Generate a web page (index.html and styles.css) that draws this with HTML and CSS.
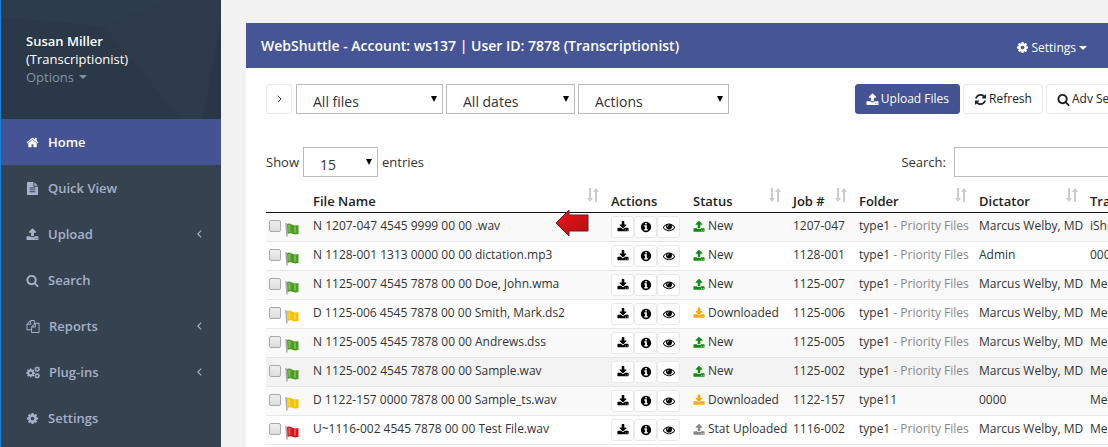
FILE: index.html
```html
<!DOCTYPE html>
<html lang="en">

<head>
    <meta charset="UTF-8">
    <meta name="viewport" content="width=device-width, initial-scale=1.0">
    <title>WebShuttle</title>
    <link rel="stylesheet" href="styles.css">
</head>

<body>
    <!-- Icon sprite -->
    <svg class="sprite" aria-hidden="true">
        <symbol id="i-home" viewBox="0 0 1792 1792"><path d="M1472 992v480q0 26-19 45t-45 19h-384v-384h-256v384h-384q-26 0-45-19t-19-45v-480q0-1 .5-3t.5-3l575-474 575 474q1 2 1 6zm223-69l-62 74q-8 9-21 11h-3q-13 0-21-7l-692-577-692 577q-12 8-24 7-13-2-21-11l-62-74q-8-10-7-23.5t11-21.5l719-599q32-26 76-26t76 26l244 204v-195q0-14 9-23t23-9h192q14 0 23 9t9 23v408l219 182q10 8 11 21.5t-7 23.5z"/></symbol>
        <symbol id="i-file" viewBox="0 0 1792 1792"><path d="M1596 476q14 14 28 36h-472v-472q22 14 36 28zm-476 164h544v1056q0 40-28 68t-68 28h-1344q-40 0-68-28t-28-68v-1600q0-40 28-68t68-28h800v544q0 40 28 68t68 28zm160 736v-64q0-14-9-23t-23-9h-704q-14 0-23 9t-9 23v64q0 14 9 23t23 9h704q14 0 23-9t9-23zm0-256v-64q0-14-9-23t-23-9h-704q-14 0-23 9t-9 23v64q0 14 9 23t23 9h704q14 0 23-9t9-23zm0-256v-64q0-14-9-23t-23-9h-704q-14 0-23 9t-9 23v64q0 14 9 23t23 9h704q14 0 23-9t9-23z"/></symbol>
        <symbol id="i-upload" viewBox="0 0 1792 1792"><path d="M1344 1472q0-26-19-45t-45-19-45 19-19 45 19 45 45 19 45-19 19-45zm256 0q0-26-19-45t-45-19-45 19-19 45 19 45 45 19 45-19 19-45zm128-224v320q0 40-28 68t-68 28h-1472q-40 0-68-28t-28-68v-320q0-40 28-68t68-28h427q21 56 70.5 92t110.5 36h256q61 0 110.5-36t70.5-92h427q40 0 68 28t28 68zm-325-648q-17 40-59 40h-256v448q0 26-19 45t-45 19h-256q-26 0-45-19t-19-45v-448h-256q-42 0-59-40-17-39 14-69l448-448q18-19 45-19t45 19l448 448q31 30 14 69z"/></symbol>
        <symbol id="i-download" viewBox="0 0 1792 1792"><path d="M1344 1344q0-26-19-45t-45-19-45 19-19 45 19 45 45 19 45-19 19-45zm256 0q0-26-19-45t-45-19-45 19-19 45 19 45 45 19 45-19 19-45zm128-224v320q0 40-28 68t-68 28h-1472q-40 0-68-28t-28-68v-320q0-40 28-68t68-28h465l135 136q58 56 136 56t136-56l136-136h464q40 0 68 28t28 68zm-325-569q17 41-14 70l-448 448q-18 19-45 19t-45-19l-448-448q-31-29-14-70 17-39 59-39h256v-448q0-26 19-45t45-19h256q26 0 45 19t19 45v448h256q42 0 59 39z"/></symbol>
        <symbol id="i-search" viewBox="0 0 1792 1792"><path d="M1216 832q0-185-131.5-316.5t-316.5-131.5-316.5 131.5-131.5 316.5 131.5 316.5 316.5 131.5 316.5-131.5 131.5-316.5zm512 832q0 52-38 90t-90 38q-54 0-90-38l-343-342q-179 124-399 124-143 0-273.5-55.5t-225-150-150-225-55.5-273.5 55.5-273.5 150-225 225-150 273.5-55.5 273.5 55.5 225 150 150 225 55.5 273.5q0 220-124 399l343 343q37 37 37 90z"/></symbol>
        <symbol id="i-copy" viewBox="0 0 1792 1792"><path d="M1696 384q40 0 68 28t28 68v1216q0 40-28 68t-68 28h-960q-40 0-68-28t-28-68v-288h-544q-40 0-68-28t-28-68v-672q0-40 20-88t48-76l408-408q28-28 76-48t88-20h416q40 0 68 28t28 68v328q68-40 128-40h416zm-544 213l-299 299h299v-299zm-640-384l-299 299h299v-299zm196 647l316-316v-416h-384v416q0 40-28 68t-68 28h-416v640h512v-256q0-40 20-88t48-76zm956 804v-1152h-384v416q0 40-28 68t-68 28h-416v640h896z"/></symbol>
        <symbol id="i-cog" viewBox="0 0 1792 1792"><path d="M1152 896q0-106-75-181t-181-75-181 75-75 181 75 181 181 75 181-75 75-181zm512-109v222q0 12-8 23t-20 13l-185 28q-19 54-39 91 35 50 107 138 10 12 10 25t-9 23q-27 37-99 108t-94 71q-12 0-26-9l-138-108q-44 23-91 38-16 136-29 186-7 28-36 28h-222q-14 0-24.5-8.5t-11.5-21.5l-28-184q-49-16-90-37l-141 107q-10 9-25 9-14 0-25-11-126-114-165-168-7-10-7-23 0-12 8-23 15-21 51-66.5t54-70.5q-27-50-41-99l-183-27q-13-2-21-12.5t-8-23.5v-222q0-12 8-23t19-13l186-28q14-46 39-92-40-57-107-138-10-12-10-24 0-10 9-23 26-36 98.5-107.5t94.5-71.5q13 0 26 10l138 107q44-23 91-38 16-136 29-186 7-28 36-28h222q14 0 24.5 8.5t11.5 21.5l28 184q49 16 90 37l142-107q9-9 24-9 13 0 25 10 129 119 165 170 7 8 7 22 0 12-8 23-15 21-51 66.5t-54 70.5q26 50 41 98l183 28q13 2 21 12.5t8 23.5z"/></symbol>
        <symbol id="i-cogs" viewBox="0 0 14 14">
            <use href="#i-cog" x="-1" y="2" width="11" height="11"/>
            <use href="#i-cog" x="8" y="0" width="7" height="7"/>
            <use href="#i-cog" x="8" y="7" width="7" height="7"/>
        </symbol>
        <symbol id="i-refresh" viewBox="0 0 1792 1792"><path d="M1639 1056q0 5-1 7-64 268-268 434.5t-478 166.5q-146 0-282.5-55t-243.5-157l-129 129q-19 19-45 19t-45-19-19-45v-448q0-26 19-45t45-19h448q26 0 45 19t19 45-19 45l-137 137q71 66 161 102t187 36q134 0 250-65t186-179q11-17 53-117 8-23 30-23h192q13 0 22.5 9.5t9.5 22.5zm25-800v448q0 26-19 45t-45 19h-448q-26 0-45-19t-19-45 19-45l138-138q-148-137-349-137-134 0-250 65t-186 179q-11 17-53 117-8 23-30 23h-199q-13 0-22.5-9.5t-9.5-22.5v-7q65-268 270-434.5t480-166.5q146 0 284 55.5t245 156.5l130-129q19-19 45-19t45 19 19 45z"/></symbol>
        <symbol id="i-info" viewBox="0 0 1792 1792"><path d="M1152 1376v-160q0-14-9-23t-23-9h-96v-512q0-14-9-23t-23-9h-320q-14 0-23 9t-9 23v160q0 14 9 23t23 9h96v320h-96q-14 0-23 9t-9 23v160q0 14 9 23t23 9h448q14 0 23-9t9-23zm-128-896v-160q0-14-9-23t-23-9h-192q-14 0-23 9t-9 23v160q0 14 9 23t23 9h192q14 0 23-9t9-23zm640 416q0 209-103 385.5t-279.5 279.5-385.5 103-385.5-103-279.5-279.5-103-385.5 103-385.5 279.5-279.5 385.5-103 385.5 103 279.5 279.5 103 385.5z"/></symbol>
        <symbol id="i-eye" viewBox="0 0 1792 1792"><path d="M1664 960q-152-236-381-353 61 104 61 225 0 185-131.5 316.5t-316.5 131.5-316.5-131.5-131.5-316.5q0-121 61-225-229 117-381 353 133 205 333.5 326.5t434.5 121.5 434.5-121.5 333.5-326.5zm-720-384q0-20-14-34t-34-14q-125 0-214.5 89.5t-89.5 214.5q0 20 14 34t34 14 34-14 14-34q0-86 61-147t147-61q20 0 34-14t14-34zm848 384q0 34-20 69-140 230-376.5 368.5t-499.5 138.5-499.5-139-376.5-368q-20-35-20-69t20-69q140-229 376.5-368t499.5-139 499.5 139 376.5 368q20 35 20 69z"/></symbol>
        <symbol id="i-left" viewBox="0 0 6 10"><path d="M5 1L1 5l4 4" fill="none" stroke="currentColor" stroke-width="1.4"/></symbol>
        <symbol id="i-right" viewBox="0 0 6 10"><path d="M1 1l4 4-4 4" fill="none" stroke="currentColor" stroke-width="1.2"/></symbol>
        <symbol id="i-caret" viewBox="0 0 8 4"><path d="M0 0h8L4 4z"/></symbol>
        <symbol id="i-sort" viewBox="0 0 12 14"><path d="M2 0h2v10h2l-3 4-3-4h2zM8 14h2V4h2L9 0 6 4h2z"/></symbol>
        <symbol id="i-flag" viewBox="0 0 14 15">
            <path d="M1 1l1 13.500" fill="none" stroke="#a9a9a9" stroke-width="1.5"/>
            <path d="M2 2q2.500-1 5 .5t6.500.5v9q-3.500 1-6-.2t-5 .2z"/>
            <path d="M3 3q1.500-.6 2.500-.2v7.500q-1-.4-2 0zM9 4.500h2v6H9z" fill="#fff" opacity=".25"/>
        </symbol>
    </svg>

    <div class="layout">
        <aside class="sidebar">
            <div class="profile">
                <svg class="facets" viewBox="0 0 220 119" preserveAspectRatio="none" aria-hidden="true">
                    <path d="M0 0h170l-68 26L0 17z" fill="#2d3c4b"/>
                    <path d="M102 26L170 0h50v20l-18 99h-22z" fill="#2d3a49"/>
                    <path d="M220 20v99h-18z" fill="#2a3746"/>
                </svg>
                <strong>Susan Miller</strong>
                <span>(Transcriptionist)</span>
                <a href="#" class="options">Options <svg class="caret"><use href="#i-caret"/></svg></a>
            </div>
            <nav>
                <a href="#" class="active"><svg class="icon"><use href="#i-home"/></svg>Home</a>
                <a href="#"><svg class="icon"><use href="#i-file"/></svg>Quick View</a>
                <a href="#"><svg class="icon"><use href="#i-upload"/></svg>Upload<svg class="chevron"><use href="#i-left"/></svg></a>
                <a href="#"><svg class="icon"><use href="#i-search"/></svg>Search</a>
                <a href="#"><svg class="icon wide"><use href="#i-copy"/></svg>Reports<svg class="chevron"><use href="#i-left"/></svg></a>
                <a href="#"><svg class="icon wide"><use href="#i-cogs"/></svg>Plug-ins<svg class="chevron"><use href="#i-left"/></svg></a>
                <a href="#"><svg class="icon"><use href="#i-cog"/></svg>Settings</a>
            </nav>
        </aside>

        <main>
            <section class="panel">
                <header class="panel-header">
                    <h1>WebShuttle - Account: ws137 | User ID: 7878 (Transcriptionist)</h1>
                    <button class="settings"><svg class="icon"><use href="#i-cog"/></svg>Settings<svg class="caret"><use href="#i-caret"/></svg></button>
                </header>

                <div class="panel-body">
                    <div class="toolbar">
                        <div class="filters">
                            <button class="btn btn-expand" aria-label="Expand"><svg class="chevron"><use href="#i-right"/></svg></button>
                            <span class="select files"><select aria-label="Files"><option>All files</option></select></span>
                            <span class="select dates"><select aria-label="Dates"><option>All dates</option></select></span>
                            <span class="select actions"><select aria-label="Actions"><option>Actions</option></select></span>
                        </div>
                        <div class="buttons">
                            <button class="btn btn-primary"><svg class="icon"><use href="#i-upload"/></svg>Upload Files</button>
                            <button class="btn"><svg class="icon"><use href="#i-refresh"/></svg>Refresh</button>
                            <button class="btn"><svg class="icon"><use href="#i-search"/></svg>Adv Search</button>
                        </div>
                    </div>

                    <div class="table-controls">
                        <label>Show <span class="select length"><select><option>15</option></select></span> entries</label>
                        <label>Search: <input type="search" class="search-box"></label>
                    </div>

                    <table>
                        <thead>
                            <tr>
                                <th class="col-check"></th>
                                <th class="col-name"><div>File Name<svg class="sort"><use href="#i-sort"/></svg></div></th>
                                <th class="col-actions"><div>Actions</div></th>
                                <th class="col-status"><div>Status<svg class="sort"><use href="#i-sort"/></svg></div></th>
                                <th class="col-job"><div>Job #<svg class="sort"><use href="#i-sort"/></svg></div></th>
                                <th class="col-folder"><div>Folder<svg class="sort"><use href="#i-sort"/></svg></div></th>
                                <th class="col-dictator"><div>Dictator<svg class="sort"><use href="#i-sort"/></svg></div></th>
                                <th><div>Transcriber</div></th>
                            </tr>
                        </thead>
                        <tbody id="jobs"></tbody>
                    </table>
                </div>
            </section>
        </main>
    </div>

    <script>
        // flag, file name, status, job, folder, dictator, transcriber
        const jobs = [
            ['green', 'N 1207-047 4545 9999 00 00 .wav', 'New', '1207-047', 'type1', 'Marcus Welby, MD', 'iShuttle'],
            ['green', 'N 1128-001 1313 0000 00 00 dictation.mp3', 'New', '1128-001', 'type1', 'Admin', '0000'],
            ['green', 'N 1125-007 4545 7878 00 00 Doe, John.wma', 'New', '1125-007', 'type1', 'Marcus Welby, MD', 'Medical'],
            ['yellow', 'D 1125-006 4545 7878 00 00 Smith, Mark.ds2', 'Downloaded', '1125-006', 'type1', 'Marcus Welby, MD', 'Medical'],
            ['green', 'N 1125-005 4545 7878 00 00 Andrews.dss', 'New', '1125-005', 'type1', 'Marcus Welby, MD', 'Medical'],
            ['green', 'N 1125-002 4545 7878 00 00 Sample.wav', 'New', '1125-002', 'type1', 'Marcus Welby, MD', 'Medical'],
            ['yellow', 'D 1122-157 0000 7878 00 00 Sample_ts.wav', 'Downloaded', '1122-157', 'type11', '0000', 'Medical'],
            ['red', 'U~1116-002 4545 7878 00 00 Test File.wav', 'Stat Uploaded', '1116-002', 'type1', 'Marcus Welby, MD', 'Medical']
        ];

        const statusClass = { 'New': 'new', 'Downloaded': 'downloaded', 'Stat Uploaded': 'uploaded' };

        const icon = (name, cls = 'icon') => `<svg class="${cls}"><use href="#i-${name}"/></svg>`;

        // Pointer on the newest file
        const pointer = `
            <svg class="pointer" viewBox="0 0 34 28" aria-hidden="true">
                <defs><linearGradient id="red" x1="0" y1="0" x2="1" y2="1"><stop offset="0" stop-color="#e8171c"/><stop offset="1" stop-color="#b50d10"/></linearGradient></defs>
                <path d="M1 14L14 1v5h19v16H14v5z" fill="url(#red)" stroke="#6d2020" stroke-width="1"/>
            </svg>`;

        document.getElementById('jobs').innerHTML = jobs.map(([flag, file, status, job, folder, dictator, transcriber], i) => `
            <tr class="${i === 5 ? 'current' : ''}">
                <td class="check"><div><input type="checkbox" aria-label="Select ${file}">${icon('flag', 'flag ' + flag)}</div></td>
                <td class="name">${file}${i === 0 ? pointer : ''}</td>
                <td class="row-actions"><div>
                    <button aria-label="Download">${icon('download')}</button>
                    <button aria-label="Info">${icon('info')}</button>
                    <button aria-label="View">${icon('eye')}</button>
                </div></td>
                <td><div class="status ${statusClass[status]}">${icon(status === 'Downloaded' ? 'download' : 'upload')}${status}</div></td>
                <td>${job}</td>
                <td>${folder}${folder === 'type1' ? ' <span class="muted">- Priority Files</span>' : ''}</td>
                <td>${dictator}</td>
                <td>${transcriber}</td>
            </tr>`).join('');
    </script>
</body>

</html>
```
FILE: styles.css
```css
/* Global Styles */
* {
    margin: 0;
    padding: 0;
    box-sizing: border-box;
}

body {
    font-family: "Open Sans", sans-serif;
    font-size: 12px;
    line-height: 18px;
    color: #333;
    background-color: #f2f2f3;
    overflow: hidden;
}

a {
    color: inherit;
    text-decoration: none;
}

button,
input,
select {
    font: inherit;
    color: inherit;
}

button {
    cursor: pointer;
}

svg {
    display: block;
    flex: none;
    fill: currentColor;
}

.sprite {
    position: absolute;
    width: 0;
    height: 0;
}

.icon {
    width: 13px;
    height: 13px;
}

.caret {
    width: 8px;
    height: 4px;
}

.chevron {
    width: 6px;
    height: 10px;
}

.layout {
    display: flex;
    height: 100vh;
}

/* Sidebar */
.sidebar {
    flex: none;
    width: 221px;
    border-left: 1px solid #1583d8;
    background-color: #35424f;
}

.profile {
    position: relative;
    display: flex;
    flex-direction: column;
    padding: 32px 25px 33px;
    background-color: #2b3847;
    color: #fff;
    font-size: 13px;
}

.profile > * {
    position: relative;
}

.profile .facets {
    position: absolute;
    top: 0;
    left: 0;
    width: 100%;
    height: 100%;
}

.profile strong {
    font-weight: 600;
}

.options {
    display: flex;
    align-items: center;
    gap: 5px;
    color: #8095a8;
}

nav a {
    display: flex;
    align-items: center;
    gap: 9px;
    height: 46px;
    padding: 0 19px 0 25px;
    color: #a7b1c9;
    font-size: 13px;
    font-weight: 600;
}

nav .wide {
    width: 14px;
}

nav .chevron {
    width: 5px;
    margin-left: auto;
}

nav .active {
    background-color: #435394;
    color: #fff;
}

/* Panel */
main {
    flex: 1;
    min-width: 0;
    padding: 23px 0 0 25px;
    overflow: hidden;
}

.panel {
    min-width: 919px;
    background-color: #fff;
}

.panel-header {
    display: flex;
    justify-content: space-between;
    align-items: center;
    height: 45px;
    padding: 0 78px 0 15px;
    background-color: #465596;
    color: #fff;
}

.panel-header h1 {
    font-size: 14px;
    font-weight: 600;
}

.settings {
    display: flex;
    align-items: center;
    gap: 3px;
    padding-top: 4px;
    border: none;
    background: none;
}

.panel-body {
    padding: 16px 20px;
}

.toolbar,
.table-controls {
    display: flex;
    justify-content: space-between;
}

.filters,
.buttons {
    display: flex;
    gap: 3px;
}

.btn {
    display: flex;
    align-items: center;
    justify-content: center;
    gap: 2px;
    height: 30px;
    padding: 0 10px;
    border: 1px solid #e7eaec;
    border-radius: 3px;
    background-color: #fff;
    color: #222;
}

.btn-primary {
    border-color: #435394;
    background-color: #435394;
    color: #fff;
}

.btn-expand {
    width: 26px;
    padding: 0;
    margin-right: 1px;
}

.btn-expand .chevron {
    width: 5px;
    height: 8px;
}

/* Selects */
.select {
    position: relative;
    display: block;
}

.select::after {
    content: "";
    position: absolute;
    top: 12px;
    right: 6px;
    border: 3px solid transparent;
    border-top: 6px solid #000;
    border-bottom: none;
    pointer-events: none;
}

select {
    appearance: none;
    width: 100%;
    height: 30px;
    padding: 6px 16px 0;
    border: 1px solid #bbb;
    border-radius: 0;
    background-color: #fff;
    font-size: 14px;
}

.files {
    width: 147px;
}

.dates {
    width: 129px;
}

.actions {
    width: 151px;
}

.length {
    width: 75px;
}

.table-controls {
    margin-top: 33px;
    font-size: 13px;
}

.table-controls label {
    display: flex;
    align-items: center;
    gap: 4px;
    height: 30px;
}

.search-box {
    width: 191px;
    height: 30px;
    margin-left: 4px;
    border: 1px solid #bbb;
    background-color: #fff;
}

/* Jobs table */
table {
    width: 100%;
    table-layout: fixed;
    border-collapse: separate;
    border-spacing: 0;
}

.col-check {
    width: 39px;
}

.col-name {
    width: 298px;
}

.col-actions {
    width: 82px;
}

.col-status {
    width: 100px;
}

.col-job {
    width: 66px;
}

.col-folder {
    width: 120px;
}

.col-dictator {
    width: 111px;
}

th {
    padding: 11px 4px 2px 8px;
    border-bottom: 1px solid #111;
    color: #222;
    font-size: 13px;
    font-weight: 600;
    text-align: left;
}

th div {
    display: flex;
    justify-content: space-between;
    padding-top: 4px;
}

.sort {
    width: 12px;
    height: 14px;
    margin-top: -4px;
    color: #ccc;
}

td {
    height: 29px;
    padding: 4px 0 3px 8px;
    border-bottom: 1px solid #e7e7e7;
    vertical-align: top;
    white-space: nowrap;
}

tbody tr:nth-child(odd) {
    background-color: #f9f9f9;
}

tbody .current {
    background-color: #f3f3f3;
}

td.check {
    padding-left: 3px;
}

.check div {
    display: flex;
    gap: 4px;
    padding-top: 3px;
}

input[type="checkbox"] {
    appearance: none;
    width: 12px;
    height: 12px;
    border: 1px solid #a9a9a9;
    border-radius: 2px;
    background: linear-gradient(#eee, #ddd);
}

.flag {
    width: 14px;
    height: 15px;
    margin-top: 2px;
}

.green {
    color: #4b9e1f;
}

.yellow {
    color: #f5c400;
}

.red {
    color: #d8161b;
}

.name {
    position: relative;
}

.pointer {
    position: absolute;
    top: -4px;
    right: 14px;
    width: 34px;
    height: 28px;
}

td.row-actions {
    padding-top: 3px;
}

.row-actions div {
    display: flex;
}

.row-actions button {
    display: flex;
    align-items: center;
    justify-content: center;
    width: 23px;
    height: 22px;
    border: 1px solid #e7eaec;
    border-radius: 3px;
    background-color: #fff;
    color: #000;
}

.row-actions .icon {
    width: 12px;
    height: 12px;
}

.status {
    display: flex;
    align-items: center;
    gap: 3px;
}

.status .icon {
    width: 12px;
}

.new .icon {
    color: #148a14;
}

.downloaded .icon {
    color: #ffa500;
}

.uploaded .icon {
    color: #888;
}

.muted {
    color: #888;
}
```
